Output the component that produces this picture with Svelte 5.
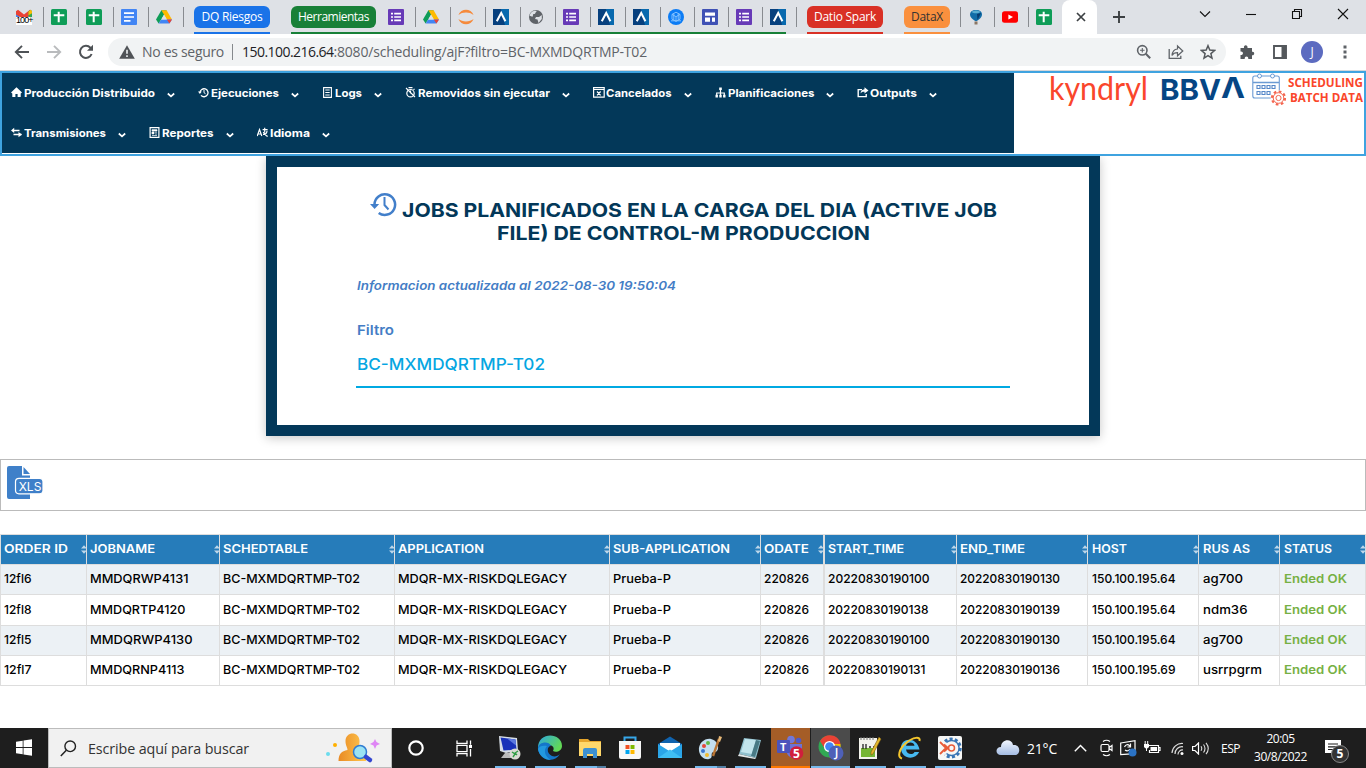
<script>
  // Spreads the letters of a label evenly so that it takes the given width.
  function fit(node, width) {
    const natural = node.getBoundingClientRect().width;
    const count = [...node.textContent].length;
    node.style.letterSpacing = (width - natural) / count + 'px';
  }

  function stretch(node, width) {
    const natural = node.getBoundingClientRect().width;
    node.style.width = width + 'px';
    node.style.transform = `scaleX(${width / natural})`;
  }

  const svg = (w, h, body, box = `0 0 ${w} ${h}`) =>
    `<svg width="${w}" height="${h}" viewBox="${box}" fill="none" style="display:block">${body}</svg>`;

  const forms = svg(16, 16, '<rect width="16" height="16" rx="1" fill="#673ab7"/><path d="M3 4.6h2M3 8h2M3 11.4h2M6.2 4.6H13M6.2 8H13M6.2 11.4H13" stroke="#fff" stroke-width="1.7"/>');
  const drive = svg(16, 16, '<path d="M5.4 1.2h5.2L5.2 10.6 2.6 14.6 0 10.4z" fill="#0f9d58"/><path d="M5.4 1.2h5.2L16 10.4h-5.1z" fill="#ffba00"/><path d="M5.2 10.4H16l-2.6 4.2H2.6z" fill="#4285f4"/><path d="M8 5.8l2.7 4.6H5.3z" fill="#dee1e6"/><path d="M10.9 10.4H16l-2.6 4.2z" fill="#ea4335"/>');
  const sheets = svg(16, 16, '<rect width="16" height="16" rx="1.5" fill="#0f9d58"/><path d="M2.7 6.2h10.6M7.7 2.7v10.6" stroke="#fff" stroke-width="2"/>');
  const bbvaTab = svg(16, 16, '<path d="M0 0h16v16H0z" fill="#07407e"/><path d="M8 0h8v16h-4z" fill="#0869ae"/><path d="M3.8 12.3L8.2 4l4.2 8.3" stroke="#fff" stroke-width="2"/>');
  const icons = {
    gmail: svg(16, 16, '<path d="M0 2h3.5v6H0z" fill="#4285f4"/><path d="M0 2.2L2 .8l6 4.6 6-4.6 2 1.4v3.2l-8 5-8-5z" fill="#ea4335"/><path d="M12.5 2.200L14.6.8 16 2.200V8h-3.500z" fill="#34a853"/><path d="M12.500 2.500L14.600.8 16 2.200v2l-3.500 2z" fill="#fbbc04"/><path d="M0 8h16v8H0z" fill="#fff"/>'),
    sheets, forms, drive, bbvaTab,
    docs: svg(16, 16, '<rect width="16" height="16" rx="1" fill="#4285f4"/><path d="M3 4.1h10M3 8h10M3 11.9h6.5" stroke="#fff" stroke-width="1.7"/>'),
    jupyter: svg(16, 16, '<path d="M.4 6C3-1 13-1 15.6 6 11.500 2.700 4.500 2.700.4 6zM.4 10c2.600 7 12.600 7 15.200 0-4.100 3.300-11.100 3.300-15.200 0z" fill="#f58a3c"/>'),
    globe: svg(16, 16, '<circle cx="8" cy="8" r="7" fill="#5f6368"/><path d="M9 2c-2 1-1 3-3 3s0 3-2.300 2.600L1.800 6.800C2 3.300 5.500.8 9 2zM8 8h3l2.800-2v4L10.500 14l-1-3.500L7 10z" fill="#dee1e6"/>'),
    cube: svg(16, 16, '<circle cx="8" cy="8" r="8" fill="#0c7cf5"/><path d="M8 3.200l4 2.200v4.800L8 12.400l-4-2.200V5.400zM4 5.400l4 2.300 4-2.300M8 7.700v4.700M3 11.800h10M5.800 4.400v6.800M10.200 4.400v6.800" stroke="#8cc6ff" stroke-width=".9"/>'),
    layout: svg(16, 16, '<rect width="16" height="16" rx="1" fill="#3f51b5"/><path d="M3 3.500h10v3.200H3zM3 8.400h5v4.400H3zM10 8.400h3v4.400h-3z" fill="#fff"/>'),
    balloon: svg(16, 16, '<path d="M8 1c4 0 6 2 6 4.800S9.500 12 8 12.200C6.500 12 2 8.600 2 5.800S4 1 8 1z" fill="#116ca7"/><path d="M3.500 3C6 1 10 1 12.500 3c-2 1.800-7 1.800-9 0z" fill="#58add0"/><path d="M9 5l4-1-3.500 7z" fill="#073b6e"/><path d="M6.500 12.500h3v3h-3z" fill="#8b7665"/>'),
    youtube: svg(16, 16, '<rect y="2.300" width="16" height="11.400" rx="2.500" fill="#f00"/><path d="M6.400 5.400v5.200L11 8z" fill="#fff"/>'),
    back: svg(16, 16, '<path d="M15 8H2M8 1.800L1.800 8 8 14.200" stroke="#4e5256" stroke-width="1.900"/>'),
    forward: svg(16, 16, '<path d="M1 8h13M8 1.800L14.200 8 8 14.200" stroke="#b9bbbd" stroke-width="1.900"/>'),
    reload: svg(16, 16, '<path d="M13.600 10A6 6 0 1 1 12.400 3.800L14 5.400" stroke="#4e5256" stroke-width="2"/><path d="M15 .8v6H9z" fill="#4e5256"/>'),
    warning: svg(16, 14, '<path d="M8 .3L15.800 13.700H.2z" fill="#505357"/><path d="M8 4.800v4M8 10.200v1.800" stroke="#f1f3f4" stroke-width="1.600"/>'),
    zoomIn: svg(16, 16, '<circle cx="6.300" cy="6.300" r="4.700" stroke="#5f6368" stroke-width="1.600"/><path d="M9.800 9.800l4.400 4.400" stroke="#5f6368" stroke-width="2"/><path d="M4 6.300h4.600M6.300 4v4.600" stroke="#5f6368" stroke-width="1.100"/>'),
    share: svg(16, 16, '<path d="M1.200 5v9.300h11.600v-2.600" stroke="#5f6368" stroke-width="1.300"/><path d="M9.500 5V2l5.300 5-5.300 4.800V8.700C6.600 8.700 5 9.700 4 11.500 4.300 8 6 5.300 9.500 5z" stroke="#5f6368" stroke-width="1.200"/>'),
    star: svg(16, 16, '<path d="M8 1.700l1.800 4.400 4.700.4-3.600 3.100 1.100 4.600L8 11.700l-4 2.500 1.100-4.600L1.500 6.500l4.700-.4z" stroke="#54585c" stroke-width="1.500"/>'),
    puzzle: svg(16, 16, '<path d="M1.500 4H5C4.200.200 9.200.200 8.500 4H13v3.800c3-.7 3 4 0 3.500V15H9.300c.4-3.300-4-3.300-3.600 0H1.500v-4c3.300.4 3.300-4 0-3.500z" fill="#54585c"/>'),
    panel: svg(14, 14, '<path d="M1 1h12v12H1z" stroke="#54585c" stroke-width="1.900"/><path d="M8.500 1H13v12H8.500z" fill="#54585c"/>'),
    dots: svg(4, 14, '<path d="M.5 .5h3v3h-3zM.5 5.500h3v3h-3zM.5 10.500h3v3h-3z" fill="#5f6368"/>'),
    home: svg(11, 11, '<path d="M5.500 .300L11 5.600 9.700 6.500V10H6.600V7H4.400v3H1.300V6.500L0 5.600z" fill="#fff"/>'),
    history: svg(11, 11, '<path d="M2 5.500a4 4 0 1 1 1 2.900" stroke="#fff" stroke-width="1.300"/><path d="M0 4.600h3.800L1.900 7z" fill="#fff"/><path d="M6 3v2.700l1.500 1" stroke="#fff"/>'),
    doc: svg(11, 11, '<path d="M1.600 .6h7.800v9.800H1.600z" stroke="#fff" stroke-width="1.100"/><path d="M3.300 3h4.400M3.300 5.500h4.400M3.300 8h4.400" stroke="#fff"/>'),
    timerOff: svg(11, 11, '<circle cx="5.500" cy="6.200" r="3.700" stroke="#fff" stroke-width="1.200"/><path d="M1 1l9 9M3.500 .6h4M5.500 3.600v3M8.500 2.800l1-1" stroke="#fff" stroke-width="1.100"/>'),
    cancel: svg(12, 11, '<path d="M.6 .6h10.600v9.600H.6zM.6 2.500h10.600M4 4.500l3.600 3.800M7.600 4.500L4 8.300" stroke="#fff" stroke-width="1.200"/>'),
    org: svg(11, 11, '<path d="M5.500 1v8M1.700 9V6h7.600v3" stroke="#fff" stroke-width="1.200"/><path d="M4.200 .4h2.600v2.600H4.200zM.5 7.800h2.400v2.600H.5zM4.300 7.800h2.400v2.600H4.300zM8.100 7.800h2.400v2.600H8.100z" fill="#fff"/>'),
    output: svg(12, 11, '<path d="M5 2.600H1.200v7h8V7" stroke="#fff" stroke-width="1.400"/><path d="M7.500 .3L11.500 3.500 7.500 6.600V4.700C5.500 4.500 4.500 5 3.500 6.500 3.800 4 5 2.500 7.500 2.300z" fill="#fff"/>'),
    transfer: svg(11, 11, '<path d="M2 3.500h6.500M2.500 7.500h8" stroke="#fff" stroke-width="1.500"/><path d="M3.200 .8v5.300L0 3.500zM7.500 5l3.400 2.500-3.400 2.700z" fill="#fff"/>'),
    report: svg(11, 11, '<path d="M1.100 .6h8.800v9.800H1.100z" stroke="#fff" stroke-width="1.200"/><path d="M3 2.700h5v1.200H3zM3 4.900h2v2H3zM6 5.200h2M6 7h2M3 8.500h5" fill="#fff" stroke="#fff" stroke-width=".7"/>'),
    lang: svg(11, 11, '<path d="M.2 9L2.500 2.500 4.800 9M1.200 7h2.700" stroke="#fff" stroke-width="1.200"/><path d="M5.600 2.700h5M7.700 .8v4.800M6 7.400c3 0 4-2 4-3.600M6.200 5c2 3 3 4 4.500 4.400" stroke="#fff" stroke-width="1.200"/>'),
    chevron: svg(8, 6, '<path d="M.8 1.500L4 4.300l3.200-2.800" stroke="#fff" stroke-width="1.700"/>'),
    calendar: svg(34, 34, '<rect x=".8" y="3" width="26.500" height="22" rx="2" stroke="#6b9bd3" stroke-width="1.100"/><path d="M1 9.500h26M7.500 1v4M20.500 1v4" stroke="#6b9bd3" stroke-width="1.400"/><circle cx="7.500" cy="3" r="2" fill="#fff" stroke="#6b9bd3"/><circle cx="20.500" cy="3" r="2" fill="#fff" stroke="#6b9bd3"/><path d="M5 12.500h3v3H5zM10 12.500h3v3h-3zM15 12.500h3v3h-3zM20 12.500h3v3h-3zM5 18.500h3v3H5zM10 18.500h3v3h-3zM15 18.500h3v3h-3z" stroke="#5688c8" stroke-width="1.100"/><circle cx="26.500" cy="25" r="7.800" fill="#fff"/><circle cx="26.500" cy="25" r="6.600" stroke="#f4654f" stroke-width="2" stroke-dasharray="2.700 2.480"/><circle cx="26.500" cy="25" r="5.300" stroke="#f4654f"/><circle cx="26.500" cy="25" r="2.600" stroke="#f4654f"/>'),
    bigHistory: svg(27, 25, '<path d="M4.500 12.300a10.300 10.300 0 1 1 4.200 8.600" stroke="#427fca" stroke-width="2.500"/><path d="M0 12h9.200l-4.600 5z" fill="#427fca"/><path d="M14.500 5v8l4 4.500" stroke="#427fca" stroke-width="2"/>'),
    file: svg(37, 34, '<path d="M2 0h13v9.500h8V33H2q-2 0-2-2V2q0-2 2-2z" fill="#3f80c9"/><path d="M16.500 1L23 8h-6.500z" fill="#3f80c9"/><rect x="8.500" y="12.300" width="27.500" height="15.500" rx="3.500" fill="#3f80c9" stroke="#fff" stroke-width="1.200"/>'),
    windows: svg(16, 17, '<path d="M0 2.700l6.700-1v6.400H0zM7.500 1.500L16 .3v7.800H7.500zM0 8.900h6.700v6.400L0 14.300zM7.500 8.900H16v7.800l-8.500-1.200z" fill="#fff"/>'),
    search: svg(17, 17, '<circle cx="10.200" cy="6.300" r="5.300" stroke="#222" stroke-width="1.400"/><path d="M6.300 10.300L.8 16" stroke="#222" stroke-width="1.500"/>'),
    person: svg(56, 32, '<defs><linearGradient id="pg"><stop stop-color="#e98a24"/><stop offset="1" stop-color="#ffc850"/></linearGradient></defs><path d="M20.500 9c0-10 14-10 14 0 0 5-1.500 6-1.500 9 5 1 8 4 8 11H13.500c0-7 3-10 9-11 0-3-2-4-2-9z" fill="url(#pg)"/><circle cx="35" cy="20" r="6.500" fill="#9be3f3" stroke="#2f7cd2" stroke-width="1.500"/><path d="M41 25l4 3" stroke="#3346d0" stroke-width="4.500" stroke-linecap="round"/><circle cx="10" cy="13" r="2" fill="#ffb000"/><circle cx="3" cy="22" r="2" fill="#6bdcee"/><path d="M50 7l1.500 3 3.500 2-3.500 1.500L50 17l-1.500-3.500L45 12l3.500-2z" fill="#df86f5"/>'),
    cortana: svg(16, 16, '<circle cx="8" cy="8" r="6.700" stroke="#fff" stroke-width="2.200"/>'),
    taskview: svg(17, 17, '<path d="M1 .5v2.800h10V.5M1 16.500v-2.800h10v2.800M1 5.300h10v6.400H1zM14.500 .5v4.200M14.500 9v7.500" stroke="#fff" stroke-width="1.300"/><path d="M13 5h3v3h-3z" fill="#fff"/>'),
    remote: svg(26, 26, '<path d="M2 1l18 2 1 13-12 2-6-2z" fill="#d7dee6"/><path d="M3.500 2.500l15 2 1 10-13 1z" fill="#1932b9"/><path d="M10 3.500l8.500 1 .5 6z" fill="#5c79df"/><path d="M8 18h7v5H4z" fill="#bbb"/><circle cx="18" cy="19" r="5.500" fill="#d8dad3"/><path d="M15 17l3 2-2 3M21 16l-3 2 2 2" stroke="#2f9d44" stroke-width="1.400"/>'),
    edge: svg(26, 26, '<defs><linearGradient id="eg" x1="0" y1="0" x2="1" y2=".5"><stop stop-color="#2ca7e2"/><stop offset="1" stop-color="#62d956"/></linearGradient></defs><path d="M1 14C0-4 25-3 25 11c0 5-6 7-9 5 2-4-1-6-4-6-5-2-8 0-11 4z" fill="url(#eg)"/><path d="M1 13c0-6 11-8 13-2-4 0-5 7 1 10 3 1 6 0 8-2-7 11-22 5-22-6z" fill="#1476ca"/><path d="M10 11c-4 4-2 11 4 14C7 25 2 20 1 14c1-3 5-4 9-3z" fill="#2298df"/>'),
    folder: svg(24, 22, '<path d="M1 2h9l2 2h11v13H1z" fill="#e6a52b"/><path d="M1 5h22v14H1z" fill="#ffd86b"/><path d="M5 21v-8q0-2 2-2h10q2 0 2 2v8h-4v-4H9v4z" fill="#3d91d2"/>'),
    store: svg(24, 24, '<path d="M6.500 7V1.500h11V7" stroke="#36a6e8" stroke-width="2"/><path d="M1 5h22v16q0 2-2 2H3q-2 0-2-2z" fill="#f7f7f7"/><path d="M7.500 9h4v4h-4z" fill="#f25022"/><path d="M12.500 9h4v4h-4z" fill="#7fba00"/><path d="M7.500 14h4v4h-4z" fill="#00a4ef"/><path d="M12.500 14h4v4h-4z" fill="#ffb900"/>'),
    mail: svg(26, 24, '<path d="M1 8L13 .5 25 8v14H1z" fill="#1063ae"/><path d="M3 7h20v9H3z" fill="#fff"/><path d="M1 8l12 7.500L25 8v14H1z" fill="#2aa5e8"/><path d="M1 22l12-8.500L25 22z" fill="#3fbef4"/>'),
    paint: svg(26, 26, '<path d="M2 16C1 8 8 3 14 4s9 8 6 12c-2 2-4 0-5 2s1 5-3 6-9-2-10-8z" fill="#c4dff0"/><circle cx="7" cy="11" r="2" fill="#e3463a"/><circle cx="11" cy="8" r="2" fill="#61b848"/><circle cx="6" cy="16" r="2" fill="#3a77d2"/><circle cx="10" cy="20" r="2" fill="#f1bb31"/><path d="M22 4l-6 17" stroke="#b97535" stroke-width="2.400"/><path d="M21 6l1-5 3 1-2 5z" fill="#e6b878"/>'),
    notepad: svg(26, 24, '<path d="M7 2l17 2-5 18-17-4z" fill="#8fbfcd"/><path d="M8 3l11 1-4 14-11-2z" fill="#c3e5ed"/><path d="M19 4l4 1-5 16-4-1z" fill="#487985"/><path d="M2 18l17 4-1 1L1 20z" fill="#e3e8e9"/>'),
    teams: svg(27, 26, '<circle cx="14" cy="4.500" r="3.800" fill="#7178da"/><circle cx="21.500" cy="5.500" r="2.800" fill="#5059c9"/><path d="M9 9h16v9c0 5-14 7-15 0z" fill="#6b73d5"/><rect y="5" width="13" height="13" rx="1" fill="#4b53bc"/><circle cx="19.500" cy="18" r="6.800" fill="#d01e3c"/>'),
    chrome: svg(26, 26, '<circle cx="11.500" cy="11.500" r="11" fill="#31a853"/><path d="M2 6C7-3 21-1 22.500 9H11.500L7 14z" fill="#e94235"/><path d="M12 9h10.500c1 8-4 14-11 13.500L17 14z" fill="#fbbc05"/><circle cx="11.500" cy="11.500" r="5.600" fill="#fff"/><circle cx="11.500" cy="11.500" r="4.300" fill="#4285f4"/><circle cx="18" cy="18" r="7.500" fill="#4e60b8"/>'),
    notes: svg(24, 26, '<path d="M1 3h18v21H1z" fill="#f3f3ed"/><path d="M3 2v3M6 2v3M9 2v3M12 2v3M15 2v3" stroke="#777"/><path d="M3 13h14v9H3z" fill="#76b634"/><path d="M5 9v5M8 9v5M11 12h2M15 12h2" stroke="#222" stroke-width="1.300"/><path d="M21 2l2 2-8 15-2 1v-3z" fill="#e2b82c" stroke="#7e5d13" stroke-width=".6"/>'),
    ie: svg(26, 26, '<path d="M22.500 14.500H9c.5 5 7 6 8.500 2.500h4.700C18 26 4 24 4 13S20 1.500 22.500 14.500zM9 10.800h8.500C17 6.500 10 6.500 9 10.800z" fill="#47b9f0"/><path d="M5 23.500C0 22 2 14 9 8S24 1 22.500 6" stroke="#f5c62d" stroke-width="2"/>'),
    gearApp: svg(26, 26, '<rect x="1" y="1" width="24" height="24" rx="2" fill="#f7f7f5"/><path d="M8 6.500A9 9 0 1 1 8 19.500" stroke="#3975b4" stroke-width="3" stroke-dasharray="3 2.200"/><path d="M9.500 7.500A7.500 7.500 0 1 1 9.500 18.500" stroke="#3975b4" stroke-width="1.400"/><path d="M3 7l6 6-6 6M7 9.500l4 3.500-4 3.500" stroke="#e85b38" stroke-width="1.800"/><circle cx="14.500" cy="13" r="3" stroke="#e85b38" stroke-width="1.500"/>'),
    cloud: svg(24, 16, '<defs><linearGradient id="cg" x2="0" y2="1"><stop stop-color="#f2f7ff"/><stop offset="1" stop-color="#a4bce3"/></linearGradient></defs><path d="M5 15C-1 15-1 7 5 7c0-8 11-9 12-2 8-1 8 10 2 10z" fill="url(#cg)"/>'),
    up: svg(13, 8, '<path d="M.8 7.200l5.700-5.700 5.700 5.700" stroke="#fff" stroke-width="1.400"/>'),
    meet: svg(13, 18, '<path d="M3 2.500q3.500-2.500 7 0M3 15.500q3.500 2.500 7 0M2.500 5.500h5q1.500 0 1.500 1.500v4q0 1.500-1.500 1.500h-5q-1.500 0-1.500-1.500V7q0-1.500 1.500-1.500zM9.500 8.200L12 6.500v5L9.500 9.800" stroke="#fff" stroke-width="1.200"/>'),
    sync: svg(17, 17, '<path d="M.7 3L15 .7v13L.7 14.500z" stroke="#fff" stroke-width="1.200"/><path d="M4.500 7q2-4 5.500-1M10.500 3.500V7H7.500M10 9q-2 3-5 1" stroke="#fff" stroke-width="1.200"/><circle cx="12.500" cy="12.500" r="4" fill="#2b73c5"/>'),
    battery: svg(17, 14, '<path d="M4.500 4.500h10v7h-9V9M14.500 6.500H16v3h-1.500" stroke="#fff" stroke-width="1.200"/><path d="M6.500 6h6.500v4H6.500zM0 3h5v3q-2.500 3-5 0z" fill="#fff"/><path d="M1.200 0v3M3.700 0v3M2.500 7v3" stroke="#fff"/>'),
    wifi: svg(13, 13, '<path d="M1 11A10 10 0 0 1 12 1.500M4 12A7 7 0 0 1 12 4.800M7 12.500A4.500 4.500 0 0 1 12 8" stroke="#ddd" stroke-width="1.200"/><circle cx="11" cy="11.500" r="1.500" fill="#fff"/>'),
    sound: svg(17, 13, '<path d="M.6 4.500H3L6.500 1v11L3 8.500H.6z" stroke="#fff" stroke-width="1.200"/><path d="M9 4.300q1.500 2.200 0 4.400M11.500 2.500q3 4 0 8M14 .8q4.500 5.700 0 11.400" stroke="#ddd" stroke-width="1.100"/>'),
    notice: svg(17, 18, '<path d="M0 0h16v13h-5.500v4L6.500 13H0z" fill="#fff"/><path d="M3 4h10M3 6.800h10M3 9.500h6" stroke="#1d1d1d" stroke-width="1.200"/>'),
    sort: svg(6, 9, '<path d="M0 3.600h6L3 .3zM0 5.400h6L3 8.700z" fill="#bcd6ea"/>')
  };

  const firstTabs = ['gmail', 'sheets', 'sheets', 'docs', 'drive'];
  const toolTabs = ['forms', 'drive', 'jupyter', 'bbvaTab', 'globe', 'forms', 'bbvaTab', 'bbvaTab', 'cube', 'layout', 'forms', 'bbvaTab'];

  const menu = [
    [['home', 'Producción Distribuido', 131], ['history', 'Ejecuciones', 68], ['doc', 'Logs', 27], ['timerOff', 'Removidos sin ejecutar', 132], ['cancel', 'Cancelados', 65.5], ['org', 'Planificaciones', 86.5], ['output', 'Outputs', 47]],
    [['transfer', 'Transmisiones', 82], ['report', 'Reportes', 51.5], ['lang', 'Idioma', 40]]
  ];

  const columns = [['ORDER ID', 86, 64], ['JOBNAME', 133, 65], ['SCHEDTABLE', 175, 85], ['APPLICATION', 215, 86], ['SUB-APPLICATION', 151, 117], ['ODATE', 64, 45], ['START_TIME', 132, 76], ['END_TIME', 131, 65], ['HOST', 111, 35], ['RUS AS', 81, 47], ['STATUS', 86, 48]];
  const grid = columns.map((c) => c[1] + 'px').join(' ');

  const rows = [
    [['12fl6', 27.5], ['MMDQRWP4131', 98.5], ['BC-MXMDQRTMP-T02', 137], ['MDQR-MX-RISKDQLEGACY', 169], ['Prueba-P', 58], ['220826', 45], ['20220830190100', 101.5], ['20220830190130', 100], ['150.100.195.64', 83.5], ['ag700', 40], ['Ended OK', 63]],
    [['12fl8', 27.5], ['MMDQRTP4120', 95.5], ['BC-MXMDQRTMP-T02', 137], ['MDQR-MX-RISKDQLEGACY', 169], ['Prueba-P', 58], ['220826', 45], ['20220830190138', 100.5], ['20220830190139', 100], ['150.100.195.64', 83.5], ['ndm36', 44.5], ['Ended OK', 63]],
    [['12fl5', 27.5], ['MMDQRWP4130', 102.5], ['BC-MXMDQRTMP-T02', 137], ['MDQR-MX-RISKDQLEGACY', 169], ['Prueba-P', 58], ['220826', 45], ['20220830190100', 101.5], ['20220830190130', 100], ['150.100.195.64', 83.5], ['ag700', 40], ['Ended OK', 63]],
    [['12fl7', 27.5], ['MMDQRNP4113', 94.5], ['BC-MXMDQRTMP-T02', 137], ['MDQR-MX-RISKDQLEGACY', 169], ['Prueba-P', 58], ['220826', 45], ['20220830190131', 97.5], ['20220830190136', 100], ['150.100.195.69', 83.5], ['usrrpgrm', 59], ['Ended OK', 63]]
  ];

  const apps = [['remote', 'run'], ['edge', 'run'], ['folder', 'run multi'], ['store', ''], ['mail', ''], ['paint', 'run multi'], ['notepad', 'run'], ['teams', 'run alert', '5'], ['chrome', 'run current', 'J'], ['notes', 'run'], ['ie', 'run'], ['gearApp', 'run']];
</script>

{#snippet label(text, width)}<span class="t" use:fit={width}>{text}</span>{/snippet}
{#snippet wide(text, width)}<span class="t w" use:stretch={width}>{text}</span>{/snippet}

<div class="screen">
  <header class="tabs">
    {#each firstTabs as tab, i}
      <div class="tab">{@html icons[tab]}{#if i === 0}<b class="count">100+</b>{/if}</div>
    {/each}
    <div class="group blue"><div class="pill">{@render label('DQ Riesgos', 61)}</div></div>
    <div class="group green">
      <div class="pill">{@render label('Herramientas', 71)}</div>
      {#each toolTabs as tab, i}
        <div class="tab" class:narrow={i > 7}>{@html icons[tab]}</div>
      {/each}
    </div>
    <div class="group red"><div class="pill">{@render label('Datio Spark', 62)}</div></div>
    <div class="group orange"><div class="pill">{@render label('DataX', 32)}</div></div>
    <div class="rule"></div>
    <div class="tab narrow">{@html icons.balloon}</div>
    <div class="tab narrow">{@html icons.youtube}</div>
    <div class="tab last">{@html icons.sheets}</div>
    <div class="active"><svg width="10" height="10" viewBox="0 0 10 10"><path d="M1 1l8 8M9 1L1 9" stroke="#3c4043" stroke-width="1.700" /></svg></div>
    <svg class="plus" width="12" height="12" viewBox="0 0 12 12"><path d="M6 0v12M0 6h12" stroke="#3c4043" stroke-width="1.900" /></svg>
    <div class="window">
      <svg width="12" height="12" viewBox="0 0 12 12"><path d="M1 3.500l5 5 5-5" /></svg>
      <svg width="12" height="12" viewBox="0 0 12 12"><path d="M1 6.500h10" /></svg>
      <svg width="12" height="12" viewBox="0 0 12 12"><path d="M1.500 3.500h7v7h-7zM3.500 3.500v-2h7v7h-2" /></svg>
      <svg width="12" height="12" viewBox="0 0 12 12"><path d="M1 1l10 10M11 1L1 11" /></svg>
    </div>
  </header>

  <div class="toolbar">
    <div class="moves">{@html icons.back}{@html icons.forward}{@html icons.reload}</div>
    <div class="address">
      {@html icons.warning}
      <span class="secure">{@render label('No es seguro', 82)}</span>
      <i></i>
      <span class="host">{@render label('150.100.216.64', 91.500)}</span><span class="path">{@render label(':8080/scheduling/ajF?filtro=BC-MXMDQRTMP-T02', 313.500)}</span>
      <div class="actions">{@html icons.zoomIn}{@html icons.share}{@html icons.star}</div>
    </div>
    <div class="extra">{@html icons.puzzle}{@html icons.panel}<span class="avatar">J</span>{@html icons.dots}</div>
  </div>

  <section class="banner">
    <nav>
      {#each menu as line}
        <div class="line">
          {#each line as [icon, text, width]}
            <a><span class="ico">{@html icons[icon]}</span><span class="name" style="width:{width}px">{@render wide(text, width)}</span><span class="down">{@html icons.chevron}</span></a>
          {/each}
        </div>
      {/each}
    </nav>
    <div class="logos">
      <span class="kyndryl">{@render wide('kyndryl', 99)}</span>
      <span class="bbva"><span>{@render wide('BBV', 61)}</span><span class="peak">{@render wide('Λ', 24)}</span></span>
      <span class="cal">{@html icons.calendar}</span>
      <span class="sched"><span>{@render wide('SCHEDULING', 75)}</span><span>{@render wide('BATCH DATA', 73)}</span></span>
    </div>
  </section>

  <main>
    <section class="card">
      <h1>
        <span class="first">{@html icons.bigHistory}{@render wide('JOBS PLANIFICADOS EN LA CARGA DEL DIA (ACTIVE JOB', 595)}</span>
        <span>{@render wide('FILE) DE CONTROL-M PRODUCCION', 373)}</span>
      </h1>
      <p class="info">{@render wide('Informacion actualizada al 2022-08-30 19:50:04', 319)}</p>
      <p class="caption">{@render wide('Filtro', 37)}</p>
      <div class="field">{@render wide('BC-MXMDQRTMP-T02', 188)}</div>
    </section>

    <section class="export"><span class="xls">{@html icons.file}<b>XLS</b></span></section>

    <section class="table">
      <div class="row head" style="grid-template-columns:{grid}">
        {#each columns as [text, , width]}
          <div class="cell">{@render wide(text, width)}<span class="sort">{@html icons.sort}</span></div>
        {/each}
      </div>
      {#each rows as row}
        <div class="row" style="grid-template-columns:{grid}">
          {#each row as [text, width]}
            <div class="cell" class:ok={text === 'Ended OK'}>{@render wide(text, width)}</div>
          {/each}
        </div>
      {/each}
    </section>
  </main>

  <footer>
    <div class="start">{@html icons.windows}</div>
    <div class="find">{@html icons.search}<span>{@render label('Escribe aquí para buscar', 161)}</span>{@html icons.person}</div>
    <div class="sys">{@html icons.cortana}</div>
    <div class="sys view">{@html icons.taskview}</div>
    {#each apps as [icon, kind, mark]}
      <div class="app {kind}">{@html icons[icon]}{#if icon === 'teams'}<b class="tee">T</b>{/if}{#if mark}<b class="mark">{mark}</b>{/if}</div>
    {/each}
    <div class="tray">
      {@html icons.cloud}<span class="temp">{@render label('21°C', 30)}</span>
      <div class="small">{@html icons.up}{@html icons.meet}{@html icons.sync}{@html icons.battery}{@html icons.wifi}{@html icons.sound}</div>
      <span class="lang">{@render label('ESP', 19)}</span>
      <div class="clock"><span>{@render label('20:05', 28)}</span><span>{@render label('30/8/2022', 53)}</span></div>
      <div class="notice">{@html icons.notice}<b>5</b></div>
    </div>
  </footer>
</div>

<style>
  :global(body) { margin: 0; overflow: hidden; }
  * { box-sizing: border-box; }
  .screen { width: 1366px; height: 768px; display: flex; flex-direction: column; background: #fff; font-family: 'Open Sans', sans-serif; overflow: hidden; }
  .t { display: inline-block; white-space: pre; }
  .w { transform-origin: 0 50%; }

  .tabs { height: 34px; background: #dee1e6; display: flex; padding-left: 9px; flex: none; }
  .tab { width: 35px; height: 34px; padding: 9px 0 0 7px; position: relative; flex: none; }
  .tab::after { content: ''; position: absolute; right: 0; top: 7px; height: 20px; width: 1px; background: #888b90; }
  .tab.narrow { width: 34px; }
  .tab.last { width: 33px; }
  .tab.last::after { display: none; }
  .count { position: absolute; left: 7px; top: 15px; width: 17px; font: 500 9px/10px 'Liberation Sans', sans-serif; letter-spacing: -.9px; color: #000; }
  .group { position: relative; display: flex; flex: none; height: 34px; margin-left: 21px; border-bottom: 2px solid var(--c); }
  .pill { height: 22px; margin-top: 6px; border-radius: 6px; background: var(--c); color: #fff; font-size: 12px; line-height: 22px; text-align: center; width: var(--w); flex: none; }
  .blue { --c: #1a73e8; --w: 76px; margin-left: 10px; }
  .green { --c: #188038; --w: 85px; width: 495px; }
  .green .pill { margin-right: 5px; }
  .red { --c: #d93025; --w: 76px; }
  .orange { --c: #fa903e; --w: 46px; }
  .orange .pill { color: #333; }
  .rule { width: 11px; height: 20px; margin-top: 7px; border-right: 1px solid #888b90; flex: none; }
  .active { width: 35px; height: 34px; background: #fff; border-radius: 8px 8px 0 0; padding: 12px 0 0 14px; flex: none; }
  .active svg { display: block; }
  .plus { margin: 11px 0 0 16px; flex: none; }
  .window { display: flex; gap: 34px; margin: 8px 0 0 74px; }
  .window svg { fill: none; stroke: #111; stroke-width: 1.1; flex: none; }

  .toolbar { height: 37px; flex: none; display: flex; border-bottom: 1px solid #d5d7da; padding: 4px 0 0; }
  .moves { width: 108px; display: flex; gap: 16px; padding: 6px 0 0 14px; }
  .address { width: 1118px; height: 28px; border-radius: 14px; background: #f1f3f4; display: flex; align-items: center; padding-left: 11px; font-size: 14px; color: #5f6368; line-height: 28px; }
  .secure { margin-left: 7px; width: 82px; }
  .address i { width: 1px; height: 16px; background: #85898d; margin: 0 9px 0 8px; }
  .host { color: #202124; }
  .actions { display: flex; gap: 16px; margin-left: auto; padding-right: 10px; }
  .extra { display: flex; align-items: center; height: 28px; padding-left: 13px; }
  .avatar { width: 22px; height: 22px; border-radius: 50%; background: #5c6bc0; color: #fff; font-size: 12px; line-height: 22px; text-align: center; margin: 0 20px 0 14px; }
  .extra :global(svg:nth-of-type(2)) { margin-left: 18px; }

  .banner { height: 85px; border: 2px solid #3fa3e0; display: flex; flex: none; background: #fff; }
  nav { width: 1012px; height: 80px; background: #033859; color: #fff; font: 700 10.900px/40px 'Inter', sans-serif; }
  .line { display: flex; height: 40px; padding-left: 9px; }
  .line a { display: flex; align-items: center; padding-right: 23px; }
  .ico { width: 13px; height: 13px; }
  .name { white-space: nowrap; }
  .down { margin: 4px 0 0 12px; }
  .logos { display: flex; padding-left: 35px; }
  .kyndryl { width: 111px; margin-top: -2px; font: 400 32px/34px 'Lato', sans-serif; color: #fa462b; }
  .bbva { width: 92px; display: flex; font: 700 28.500px/34px 'Inter', sans-serif; color: #064684; }
  .bbva > span:first-child { width: 61px; }
  .peak { margin-top: -2px; }
  .cal { width: 35px; margin-top: 0; }
  .sched { display: flex; flex-direction: column; align-items: flex-end; width: 76px; padding-top: 2px; font: 700 11.800px/14.500px 'Open Sans', sans-serif; color: #fa462b; }

  main { height: 572px; flex: none; display: flex; flex-direction: column; font-family: 'Inter', sans-serif; }
  .card { width: 834px; height: 280px; flex: none; margin-left: 266px; border: 11px solid #033859; padding: 26px 79px 0; box-shadow: 0 2px 10px rgba(0, 0, 0, .22); background: #fff; clip-path: inset(0 -20px -20px -20px); }
  h1 { margin: 0; font-size: 19.300px; line-height: 23px; font-weight: 700; color: #033859; display: flex; flex-direction: column; align-items: center; height: 85px; padding-top: 6px; white-space: nowrap; }
  .first { display: flex; gap: 5px; }
  .first :global(svg) { margin-top: -7px; flex: none; }
  h1 > span { height: 23px; }
  p { margin: 0; }
  .info { font-size: 12.400px; line-height: 16px; height: 43px; font-style: italic; font-weight: 600; color: #447dc5; padding-left: 1px; }
  .caption { font-size: 13.500px; line-height: 18px; height: 29px; font-weight: 600; color: #447dc5; padding-left: 1px; }
  .info, .caption { white-space: nowrap; }
  .field { width: 654px; height: 38px; border-bottom: 2px solid #00a9e2; color: #05a6e2; font-size: 16px; line-height: 20px; font-weight: 500; padding: 4px 0 0 1px; }
  .export { height: 52px; flex: none; margin-top: 23px; border: 1px solid #bbb; padding: 6px; }
  .xls { position: relative; display: block; width: 37px; }
  .xls b { position: absolute; left: 9px; top: 13px; width: 28px; text-align: center; color: #fff; font: 400 12px/15px 'Inter', sans-serif; }
  .table { margin-top: 23px; border-top: 1px solid #ddd; border-left: 1px solid #ddd; font-size: 12px; font-weight: 500; color: #000; }
  .row { display: grid; height: 30px; }
  .row:nth-child(4) { height: 31px; }
  .row:nth-child(even) { background: #ecf1f5; }
  .cell { border-right: 1px solid #ddd; border-bottom: 1px solid #ddd; padding-left: 3px; line-height: 28px; position: relative; white-space: nowrap; }
  .cell:nth-child(6) { border-right-width: 2px; }
  .cell:nth-child(n+9) { padding-left: 3.5px; }
  .row:nth-child(3) .cell { line-height: 30px; }
  .row:nth-child(4) .cell { line-height: 30px; }
  .head { background: #267cba; color: #fff; font-weight: 600; }
  .head .cell { line-height: 27px; }
  .sort { position: absolute; right: -1px; top: 10px; }
  .ok { color: #76b043; font-weight: 600; }

  footer { height: 40px; flex: none; background: #1e1e1e; display: flex; color: #fff; }
  .start { width: 48px; padding: 11px 0 0 16px; flex: none; }
  .find { width: 344px; flex: none; border: 1px solid #bcbcbc; background: #f1f1f1; color: #333; display: flex; align-items: center; padding-left: 11px; font-size: 14.300px; }
  .find > span { width: 180px; margin-left: 11px; }
  .find :global(svg:last-child) { margin-left: 57px; flex: none; }
  .sys { width: 48px; display: grid; place-items: center; flex: none; }
  .view { width: 50px; padding-right: 2px; }
  .app { width: 40px; flex: none; position: relative; display: grid; place-items: center; }
  .run::after { content: ''; position: absolute; left: 5px; right: 4px; bottom: 0; height: 2px; background: #76b9ed; }
  .multi::before { content: ''; position: absolute; right: 4px; bottom: 0; height: 2px; width: 9px; background: #527fa4; z-index: 1; }
  .alert { background: #a55d27; border-left: 1px solid #1e1e1e; }
  .alert::after { left: 0; right: 0; background: #ff7800; }
  .current { background: #4b4b4b; border-left: 1px solid #1e1e1e; }
  .current::after { left: 0; right: 0; }
  .mark { position: absolute; left: 18.500px; top: 18px; width: 14px; text-align: center; font: 600 12px/14px 'Open Sans', sans-serif; }
  .alert .mark { top: 19px; font-weight: 700; }
  .tee { position: absolute; left: 9px; top: 12px; font: 700 11px/13px 'Open Sans', sans-serif; }
  .tray { display: flex; align-items: center; flex: 1; padding-left: 26px; font-size: 12px; }
  .temp { width: 47px; margin-left: 7px; font-size: 14px; white-space: nowrap; }
  .small { display: flex; align-items: center; width: 147px; }
  .small :global(svg) { flex: none; }
  .small :global(svg:nth-child(2)) { margin-left: 13px; }
  .small :global(svg:nth-child(3)) { margin-left: 7px; }
  .small :global(svg:nth-child(4)) { margin-left: 7px; }
  .small :global(svg:nth-child(5)) { margin-left: 10px; }
  .small :global(svg:nth-child(6)) { margin-left: 8px; }
  .lang { width: 33px; }
  .clock { width: 53px; display: flex; flex-direction: column; align-items: center; line-height: 18px; white-space: nowrap; }
  .notice { position: relative; margin-left: 18px; padding-top: 2px; }
  .notice b { position: absolute; left: 6px; top: 7px; width: 18px; height: 18px; border: 1px solid #888; border-radius: 50%; background: #333; font-size: 12px; line-height: 16px; text-align: center; }
</style>
